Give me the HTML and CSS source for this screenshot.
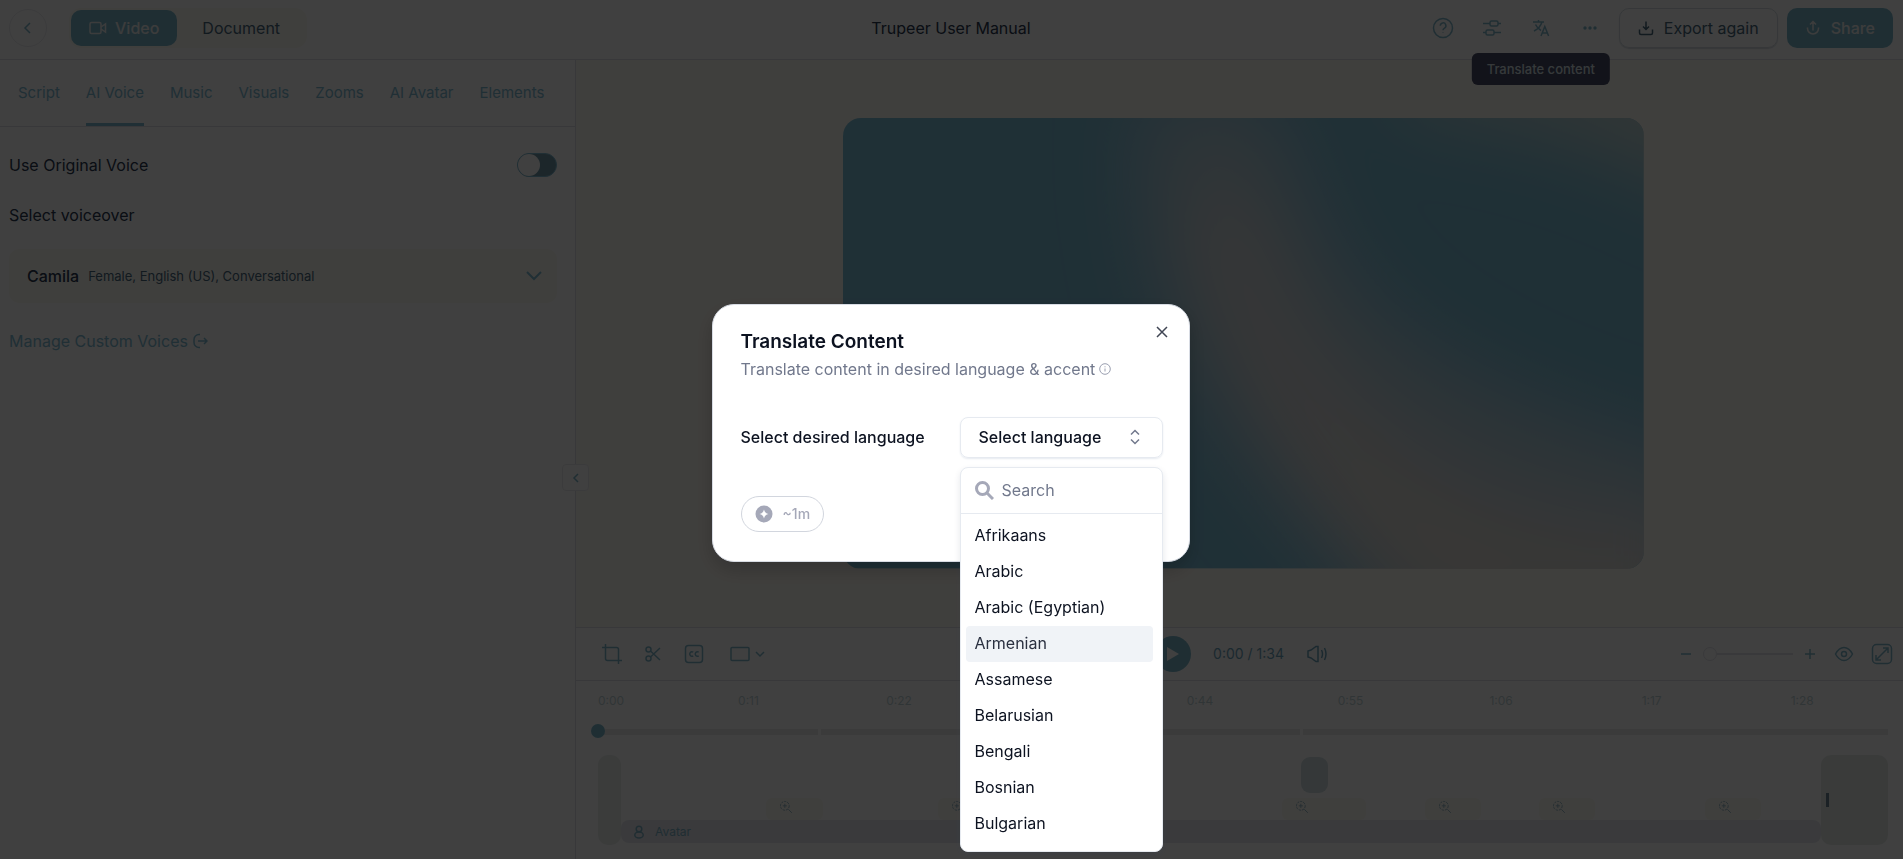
FILE: index.html
```
<!DOCTYPE html>
<html lang="en">
  <head>
    <meta charset="UTF-8" />
    <meta name="viewport" content="width=device-width, initial-scale=1.0" />
    <title>Trupeer User Manual</title>
    <link rel="stylesheet" href="styles.css">
  </head>
  <body>
    <svg class="sprite" aria-hidden="true">
      <symbol id="zoom-in" viewBox="0 0 24 24">
        <circle cx="10" cy="10" r="7.5" stroke-dasharray="4 1.5" />
        <path d="M16 16l6 6M10 6.500v7M6.500 10h7" />
      </symbol>
    </svg>

    <div class="app">
      <header class="topbar">
        <div class="topbar-left">
          <button class="back-btn" aria-label="Back">
            <svg class="icon" width="16" height="16" viewBox="0 0 16 16"><path d="M10 3L5 8l5 5" /></svg>
          </button>
          <div class="mode-switch">
            <button class="mode active">
              <svg class="icon" width="18" height="16" viewBox="0 0 18 16"><rect x="1" y="2.500" width="11" height="11" rx="1.500" /><path d="M12 7l4.500-3v8L12 9" /></svg>
              Video
            </button>
            <button class="mode">Document</button>
          </div>
        </div>
        <div class="doc-title">Trupeer User Manual</div>
        <div class="topbar-right">
          <button class="icon-btn" aria-label="Help">
            <svg class="icon" width="22" height="22" viewBox="0 0 22 22"><circle cx="11" cy="11" r="9.500" /><path d="M8.300 8.700a2.800 2.800 0 1 1 4.200 2.400c-1 .6-1.500 1-1.500 2.100M11 15.500v.6" /></svg>
          </button>
          <button class="icon-btn" aria-label="Settings">
            <svg class="icon" width="20" height="20" viewBox="0 0 20 20"><rect x="8" y="3" width="8" height="5" rx="1.500" /><rect x="4" y="12" width="8" height="5" rx="1.500" /><path d="M1 5.500h7M16 5.500h3M1 14.500h3M12 14.500h7" /></svg>
          </button>
          <div class="tooltip-wrap">
            <button class="icon-btn" aria-label="Translate content">
              <svg class="icon" width="20" height="20" viewBox="0 0 20 20"><path d="M2 4h11M7.500 2v2M11 4c-1.200 4-4 7-8 9M4.500 6.500c1.200 2.600 3 4.500 5.500 6M10 18l3.800-9.500L17.600 18M11.200 15h5.200" /></svg>
            </button>
            <div class="tooltip" role="tooltip">Translate content</div>
          </div>
          <button class="icon-btn" aria-label="More">
            <svg width="16" height="6" viewBox="0 0 16 6" fill="currentColor"><circle cx="3" cy="3" r="1.700" /><circle cx="8" cy="3" r="1.700" /><circle cx="13" cy="3" r="1.700" /></svg>
          </button>
          <button class="btn export">
            <svg class="icon" width="16" height="16" viewBox="0 0 16 16"><path d="M8 1.500v8M5 6.500l3 3 3-3M1.500 9.500V13a1.500 1.500 0 0 0 1.500 1.500h10a1.500 1.500 0 0 0 1.500-1.500V9.500" /></svg>
            Export again
          </button>
          <button class="btn share">
            <svg class="icon" width="16" height="16" viewBox="0 0 16 16"><path d="M8 10.500v-9M5 4.500l3-3 3 3M2.500 7.500v1a5.500 5.500 0 0 0 11 0v-1" /></svg>
            Share
          </button>
        </div>
      </header>

      <div class="main">
        <aside class="sidebar">
          <nav class="tabs">
            <a href="#">Script</a>
            <a href="#" class="current">AI Voice</a>
            <a href="#">Music</a>
            <a href="#">Visuals</a>
            <a href="#">Zooms</a>
            <a href="#">AI Avatar</a>
            <a href="#">Elements</a>
          </nav>
          <div class="panel">
            <div class="setting">
              <label for="original-voice">Use Original Voice</label>
              <input type="checkbox" class="toggle" id="original-voice">
            </div>
            <div class="panel-label">Select voiceover</div>
            <button class="voice">
              <span class="voice-name">Camila</span>
              <span class="voice-info">Female, English (US), Conversational</span>
              <svg class="icon" width="18" height="12" viewBox="0 0 18 12"><path d="M2 2l7 7 7-7" /></svg>
            </button>
            <a href="#" class="manage">
              Manage Custom Voices
              <svg class="icon" width="16" height="16" viewBox="0 0 16 16"><path d="M8 1.500H7a5 5 0 0 0-5 5v3a5 5 0 0 0 5 5h1M6 8h9M12 5l3 3-3 3" /></svg>
            </a>
          </div>
          <button class="collapse" aria-label="Collapse panel">
            <svg class="icon" width="12" height="12" viewBox="0 0 12 12"><path d="M8 2L4 6l4 4" /></svg>
          </button>
        </aside>

        <section class="editor">
          <div class="canvas">
            <svg class="preview" viewBox="0 0 800 450" preserveAspectRatio="none">
              <defs>
                <filter id="soft" x="-50%" y="-50%" width="200%" height="200%"><feGaussianBlur stdDeviation="38" /></filter>
              </defs>
              <rect width="800" height="450" fill="#7cbed8" />
              <g filter="url(#soft)">
                <path d="M300 -20H430Q450 60 500 150Q580 270 860 340V520H560Q400 360 340 240Q290 130 300 -20Z" fill="#b8d0da" />
                <path d="M345 90Q385 60 415 110Q440 240 560 330T860 410V520H590Q400 330 345 90Z" fill="#e0dcd8" />
                <path d="M560 -60H880V90Q720 0 560 -10Z" fill="#c8d8d4" />
              </g>
            </svg>
          </div>

          <div class="toolbar">
            <div class="tools">
              <button class="tool" aria-label="Crop">
                <svg class="icon" width="20" height="20" viewBox="0 0 20 20"><path d="M0 3.500h14.500a2 2 0 0 1 2 2V20M3.500 0v14.500a2 2 0 0 0 2 2H20" /></svg>
              </button>
              <button class="tool" aria-label="Split">
                <svg class="icon" width="18" height="18" viewBox="0 0 18 18"><circle cx="4.500" cy="4.500" r="2.500" /><circle cx="4.500" cy="13.500" r="2.500" /><path d="M6.500 6L16 15M6.500 12L16 3" /></svg>
              </button>
              <button class="tool" aria-label="Captions">
                <svg class="icon" width="20" height="20" viewBox="0 0 20 20"><rect x="1.500" y="1.500" width="17" height="17" rx="3" /><path d="M9.200 8.200a2.200 2.200 0 1 0 0 3.600M14.700 8.200a2.200 2.200 0 1 0 0 3.600" /></svg>
              </button>
              <button class="tool ratio" aria-label="Aspect ratio">
                <svg class="icon" width="20" height="16" viewBox="0 0 20 16"><rect x="1" y="1.500" width="18" height="13" rx="1" /></svg>
                <svg class="icon" width="12" height="8" viewBox="0 0 12 8"><path d="M2 2l4 4 4-4" /></svg>
              </button>
            </div>
            <div class="playback">
              <button class="play" aria-label="Play">
                <svg width="36" height="36" viewBox="0 0 36 36"><path d="M12 11v14l12-7z" fill="currentColor" /></svg>
              </button>
              <span class="time">0:00 / 1:34</span>
              <button class="tool" aria-label="Volume">
                <svg class="icon" width="22" height="18" viewBox="0 0 22 18"><path d="M2 6v6l3 1 5 3.500h2v-15h-2L5 5zM15.500 5q2 4 0 8M18.500 3q3 6 0 12" /></svg>
              </button>
            </div>
            <div class="view-tools">
              <button class="tool" aria-label="Zoom out">
                <svg class="icon" width="12" height="12" viewBox="0 0 12 12"><path d="M1 6h10" /></svg>
              </button>
              <input type="range" class="scale" min="0" max="100" value="0" aria-label="Timeline zoom">
              <button class="tool" aria-label="Zoom in">
                <svg class="icon" width="12" height="12" viewBox="0 0 12 12"><path d="M1 6h10M6 1v10" /></svg>
              </button>
              <button class="tool eye" aria-label="Preview">
                <svg class="icon" width="20" height="18" viewBox="0 0 20 18"><path d="M1.500 9Q5 2.500 10 2.500T18.500 9Q15 15.500 10 15.500T1.500 9z" /><circle cx="10" cy="9" r="2.500" /></svg>
              </button>
              <button class="tool" aria-label="Full screen">
                <svg class="icon" width="22" height="22" viewBox="0 0 22 22"><rect x="1.500" y="1.500" width="19" height="19" rx="4" /><path d="M5 17L17 5M12 5h5v5M5 12v5h5" /></svg>
              </button>
            </div>
          </div>

          <div class="timeline">
            <div class="times">
              <span>0:00</span><span>0:11</span><span>0:22</span><span>0:33</span><span>0:44</span><span>0:55</span><span>1:06</span><span>1:17</span><span>1:28</span>
            </div>
            <div class="track">
              <i class="playhead"></i>
              <i style="flex-grow: 220"></i>
              <i style="flex-grow: 480"></i>
              <i style="flex-grow: 586"></i>
            </div>
            <div class="clips">
              <div class="edge intro"></div>
              <div class="rows">
                <div class="row">
                  <div class="element-clip" style="margin-left: 56.7%"></div>
                </div>
                <div class="row zooms">
                  <div class="zoom" style="margin-left: 12.1%; width: 4.7%"><svg class="icon" width="14" height="14"><use href="#zoom-in" /></svg></div>
                  <div class="zoom" style="margin-left: 9.6%; width: 4.7%"><svg class="icon" width="14" height="14"><use href="#zoom-in" /></svg></div>
                  <div class="zoom" style="margin-left: 24%; width: 7%"><svg class="icon" width="14" height="14"><use href="#zoom-in" /></svg></div>
                  <div class="zoom" style="margin-left: 4.9%; width: 4.7%"><svg class="icon" width="14" height="14"><use href="#zoom-in" /></svg></div>
                  <div class="zoom" style="margin-left: 4.8%; width: 4.7%"><svg class="icon" width="14" height="14"><use href="#zoom-in" /></svg></div>
                  <div class="zoom" style="margin-left: 9.1%; width: 4.7%"><svg class="icon" width="14" height="14"><use href="#zoom-in" /></svg></div>
                </div>
                <div class="avatar">
                  <svg class="icon" width="12" height="14" viewBox="0 0 12 14"><circle cx="6" cy="4" r="2.800" /><ellipse cx="6" cy="10" rx="4.200" ry="3" /></svg>
                  Avatar
                </div>
              </div>
              <div class="edge outro"></div>
            </div>
          </div>
        </section>
      </div>
    </div>

    <div class="overlay">
      <div class="modal" role="dialog" aria-modal="true" aria-labelledby="modal-title">
        <button class="close" aria-label="Close">
          <svg class="icon" width="14" height="14" viewBox="0 0 14 14"><path d="M2 2l10 10M12 2L2 12" /></svg>
        </button>
        <h2 id="modal-title">Translate Content</h2>
        <p class="subtitle">
          Translate content in desired language &amp; accent
          <svg width="12" height="12" viewBox="0 0 12 12" fill="none" stroke="#9a9fb0"><circle cx="6" cy="6" r="5.300" /><path d="M6 5.500v3M6 3.300v1" /></svg>
        </p>
        <div class="field">
          <label for="language">Select desired language</label>
          <div class="combo">
            <button class="combo-btn" id="language" aria-haspopup="listbox" aria-expanded="true">
              Select language
              <svg class="icon" width="12" height="16" viewBox="0 0 12 16"><path d="M2 5.500l4-4 4 4M2 10.500l4 4 4-4" /></svg>
            </button>
            <div class="dropdown">
              <div class="search">
                <svg width="19" height="19" viewBox="0 0 19 19" fill="none" stroke="#a5a8b8" stroke-width="3"><circle cx="7.500" cy="7.500" r="6" /><path d="M12 12l6 6" /></svg>
                <input type="text" placeholder="Search" aria-label="Search">
              </div>
              <ul role="listbox" aria-label="Language">
                <li role="option">Afrikaans</li>
                <li role="option">Arabic</li>
                <li role="option">Arabic (Egyptian)</li>
                <li role="option" class="hover">Armenian</li>
                <li role="option">Assamese</li>
                <li role="option">Belarusian</li>
                <li role="option">Bengali</li>
                <li role="option">Bosnian</li>
                <li role="option">Bulgarian</li>
              </ul>
            </div>
          </div>
        </div>
        <div class="credits">
          <svg width="18" height="18" viewBox="0 0 18 18"><circle cx="9" cy="9" r="8.500" fill="#a5a8b8" /><path d="M9 4.500Q9.800 8.200 13.500 9Q9.800 9.800 9 13.500Q8.200 9.800 4.500 9Q8.200 8.200 9 4.500z" fill="#fff" /></svg>
          ~1m
        </div>
      </div>
    </div>
  </body>
</html>
```
FILE: styles.css
```
:root {
  --teal: #80bcd4;
  --icon: #80b8cc;
  --dark: #2a3850;
  --line: #e0e0e6;
  --cream: #fcfaf3;
}
* {
  box-sizing: border-box;
}
body {
  margin: 0;
  font-family: Inter, "Liberation Sans", sans-serif;
  font-size: 16px;
  line-height: 24px;
  color: var(--dark);
  background: #fff;
}
button {
  font: inherit;
  color: inherit;
  background: none;
  border: none;
  padding: 0;
  cursor: pointer;
}
a {
  color: var(--teal);
  text-decoration: none;
}
svg {
  display: block;
  flex-shrink: 0;
}
.icon {
  fill: none;
  stroke: currentColor;
  stroke-width: 1.5;
}
.sprite {
  position: absolute;
  width: 0;
  height: 0;
}
.app {
  display: flex;
  flex-direction: column;
  height: 100vh;
  min-height: 720px;
}

/* top bar */
.topbar {
  display: grid;
  grid-template-columns: 1fr auto 1fr;
  align-items: center;
  height: 60px;
  padding: 0 10px 3px 9px;
  border-bottom: 1px solid var(--line);
}
.topbar-left,
.topbar-right {
  display: flex;
  align-items: center;
}
.topbar-left {
  gap: 22px;
}
.back-btn {
  display: flex;
  align-items: center;
  justify-content: center;
  width: 38px;
  height: 38px;
  border: 1px solid #ececf0;
  border-radius: 50%;
  color: var(--icon);
}
.mode-switch {
  display: flex;
  padding: 2px;
  background: var(--cream);
  border-radius: 12px;
}
.mode {
  display: flex;
  align-items: center;
  gap: 8px;
  height: 36px;
  padding: 0 25px;
  border-radius: 10px;
  color: #48687c;
}
.mode.active {
  padding: 0 18px;
  font-weight: 500;
  color: #f0f0f0;
  background: #7cb8cc;
}
.topbar-right {
  justify-content: flex-end;
  gap: 9px;
}
.icon-btn {
  display: flex;
  align-items: center;
  justify-content: center;
  width: 40px;
  height: 40px;
  color: var(--icon);
}
.tooltip-wrap {
  position: relative;
}
.tooltip {
  position: absolute;
  top: 45px;
  left: 50%;
  transform: translateX(-50%);
  padding: 4px 15px;
  border-radius: 6px;
  font-size: 13px;
  font-weight: 500;
  white-space: nowrap;
  color: #d8e4e8;
  background: #484c68;
}
.btn {
  display: flex;
  align-items: center;
  gap: 10px;
  height: 40px;
  padding: 0 18px;
  border-radius: 10px;
}
.export {
  border: 1px solid #d6dce2;
  box-shadow: 0 1px 1px #d6dce2;
  color: #48687c;
}
.share {
  color: #f0f0f0;
  font-weight: 500;
  background: #7cb8cc;
}

/* left panel */
.main {
  display: flex;
  flex: 1;
  min-height: 0;
}
.sidebar {
  position: relative;
  width: 576px;
  flex-shrink: 0;
  border-right: 1px solid var(--line);
}
.tabs {
  display: flex;
  gap: 26px;
  height: 67px;
  padding-left: 18px;
  border-bottom: 1px solid var(--line);
  font-size: 15px;
}
.tabs a {
  padding-top: 21px;
}
.tabs .current {
  border-bottom: 3px solid var(--teal);
}
.panel {
  padding: 26px 18px 0 9px;
}
.setting {
  display: flex;
  align-items: center;
  justify-content: space-between;
}
.toggle {
  appearance: none;
  display: flex;
  width: 40px;
  height: 24px;
  margin: 0;
  border: 1px solid var(--teal);
  border-radius: 12px;
  background: #7098a8;
}
.toggle::before {
  content: "";
  width: 22px;
  height: 22px;
  border-radius: 50%;
  background: #fff;
}
.panel-label {
  margin-top: 26px;
}
.voice {
  display: flex;
  align-items: center;
  gap: 9px;
  width: 100%;
  height: 54px;
  margin: 22px 0 26px;
  padding: 0 14px 0 18px;
  border-radius: 10px;
  background: var(--cream);
}
.voice-name {
  font-weight: 500;
}
.voice-info {
  font-size: 13px;
  color: #48687c;
}
.voice .icon {
  margin-left: auto;
  color: var(--teal);
  stroke-width: 2;
}
.manage {
  display: flex;
  align-items: center;
  gap: 4px;
}
.collapse {
  position: absolute;
  top: 404px;
  right: -14px;
  display: flex;
  align-items: center;
  justify-content: center;
  width: 27px;
  height: 27px;
  border: 1px solid #ececf0;
  border-radius: 4px;
  background: #fff;
  color: var(--icon);
}

/* editor */
.editor {
  display: flex;
  flex: 1;
  flex-direction: column;
  min-width: 0;
}
.canvas {
  display: flex;
  flex: 1;
  align-items: center;
  justify-content: center;
  min-height: 0;
  padding-left: 8px;
  background: var(--cream);
}
.preview {
  width: 60.7%;
  aspect-ratio: 16 / 9;
  border-radius: 18px;
}
.toolbar {
  display: flex;
  align-items: center;
  justify-content: space-between;
  height: 54px;
  padding: 0 10px 0 26px;
  border-top: 1px solid var(--line);
  border-bottom: 1px solid var(--line);
  color: var(--icon);
}
.tools,
.playback,
.view-tools {
  display: flex;
  flex: 1;
  align-items: center;
}
.tool {
  display: flex;
  align-items: center;
}
.tools {
  gap: 22px;
}
.tool.ratio {
  gap: 4px;
  margin-left: 4px;
}
.playback {
  flex: none;
  gap: 22px;
  padding-right: 12px;
  color: #6ea4bc;
}
.time {
  font-size: 14px;
}
.play {
  border-radius: 50%;
  background: #7cb8cc;
  color: #fff;
}
.view-tools {
  justify-content: flex-end;
  gap: 11px;
}
.scale {
  appearance: none;
  width: 90px;
  height: 2px;
  margin: 0;
  background: #e4e4ea;
}
.scale::-webkit-slider-thumb {
  appearance: none;
  width: 14px;
  height: 14px;
  border: 1px solid #e4e4ea;
  border-radius: 50%;
  background: #fff;
}
.eye {
  margin: 0 6px 0 7px;
}

/* timeline */
.timeline {
  height: 178px;
  padding: 8px 15px 0 22px;
}
.times {
  display: flex;
  font-size: 12px;
  color: #c0d4d8;
}
.times span {
  width: 11.67%;
  text-align: center;
}
.times span:first-child {
  width: 5.83%;
  text-align: left;
}
.track {
  position: relative;
  display: flex;
  gap: 3px;
  margin-top: 16px;
}
.track i {
  height: 6px;
  background: #ececec;
}
.track .playhead {
  position: absolute;
  top: -5px;
  left: -7px;
  width: 14px;
  height: 14px;
  border-radius: 50%;
  background: #7cb8cc;
}
.clips {
  display: flex;
  height: 90px;
  margin-top: 20px;
}
.edge {
  border-radius: 10px;
  background: #eaeeec;
}
.intro {
  width: 23px;
}
.outro {
  display: flex;
  align-items: center;
  width: 67px;
  padding-left: 5px;
  background: #e6ece8;
}
.outro::before {
  content: "";
  width: 3px;
  height: 14px;
  background: #6c8494;
}
.rows {
  flex: 1;
  padding-top: 2px;
}
.row {
  display: flex;
  height: 41px;
}
.element-clip {
  width: 27px;
  height: 36px;
  border-radius: 9px;
  background: #d2e0e4;
}
.zooms {
  height: 22px;
}
.zoom {
  flex-shrink: 0;
  padding: 2px 13px;
  border-radius: 6px;
  background: var(--cream);
  color: #8eb0c0;
}
.avatar {
  display: flex;
  align-items: center;
  gap: 10px;
  height: 23px;
  padding-left: 12px;
  border-radius: 8px;
  font-size: 12px;
  color: #80b4c8;
  background: #e6e8f0;
}

/* translate dialog */
.overlay {
  position: fixed;
  inset: 0;
  display: flex;
  align-items: center;
  justify-content: center;
  padding: 6px 2px 0 0;
  background: rgba(0, 0, 0, 0.75);
}
.modal {
  position: relative;
  width: 478px;
  padding: 23px 26px 29px 28px;
  border: 1px solid #d8dce4;
  border-radius: 22px;
  background: #fff;
  color: #0c1220;
  box-shadow: 0 8px 20px rgba(0, 0, 0, 0.2);
}
.modal h2 {
  margin: 0;
  font-size: 19px;
  font-weight: 600;
  line-height: 28px;
}
.subtitle {
  display: flex;
  align-items: center;
  gap: 4px;
  margin: 1px 0 36px;
  color: #71788c;
}
.close {
  position: absolute;
  top: 20px;
  right: 20px;
  color: #404654;
}
.field {
  display: flex;
  align-items: center;
  justify-content: space-between;
  font-weight: 500;
}
.combo {
  position: relative;
  width: 203px;
}
.combo-btn {
  display: flex;
  align-items: center;
  justify-content: space-between;
  width: 100%;
  height: 41px;
  padding: 0 21px 0 18px;
  border: 1px solid #e6eaf0;
  border-radius: 8px;
  box-shadow: 0 1px 2px #e6eaf0;
}
.combo-btn .icon {
  color: #71788c;
}
.dropdown {
  position: absolute;
  top: 50px;
  left: 0;
  width: 100%;
  padding-bottom: 6px;
  border: 1px solid #e6eaf0;
  border-radius: 8px;
  background: #fff;
  font-weight: 400;
  box-shadow: 0 3px 6px rgba(40, 60, 90, 0.12);
}
.search {
  display: flex;
  align-items: center;
  gap: 8px;
  height: 46px;
  padding-left: 14px;
  border-bottom: 1px solid #e6eaf0;
}
.search input {
  width: 100%;
  min-width: 0;
  padding: 0;
  border: none;
  outline: none;
  font: inherit;
  background: none;
}
.search input::placeholder {
  color: #71788c;
}
.dropdown ul {
  margin: 0;
  padding: 4px 9px 3px 5px;
  list-style: none;
}
.dropdown li {
  padding: 5px 9px 7px;
  border-radius: 4px;
}
.dropdown .hover {
  color: #2a3040;
  background: #f0f3f7;
}
.credits {
  display: flex;
  align-items: center;
  gap: 10px;
  width: fit-content;
  height: 36px;
  margin-top: 38px;
  padding: 0 13px;
  border: 1px solid #d2d6de;
  border-radius: 18px;
  font-size: 14px;
  font-weight: 500;
  color: #a5a8b8;
}
```
